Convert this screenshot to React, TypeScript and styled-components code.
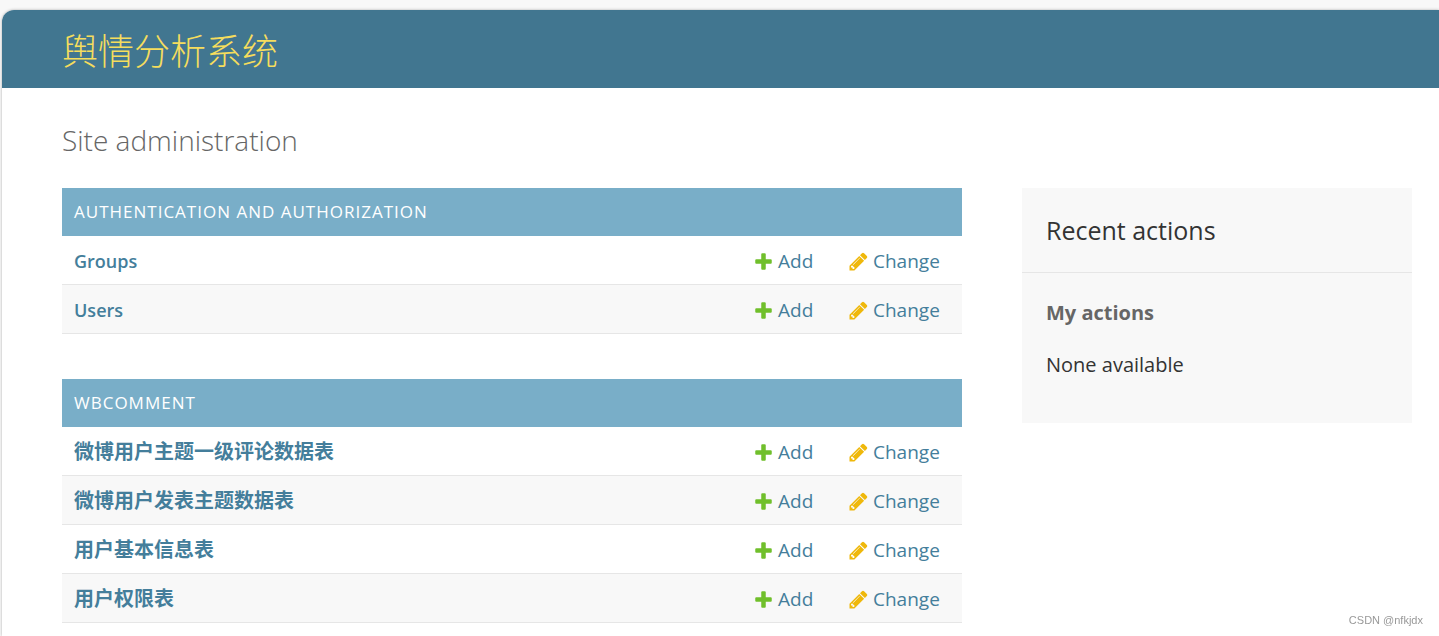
import React from "react";
import styled, { createGlobalStyle } from "styled-components";

const GlobalStyle = createGlobalStyle`
  *, *::before, *::after { box-sizing: border-box; }
  body {
    margin: 0;
    background: #f8f8f8;
    color: #333;
    font-family: "Open Sans", "Noto Sans CJK SC", sans-serif;
    font-size: 19px;
  }
  h1, h2, h3, p { margin: 0; }
`;

const Page = styled.div`
  padding: 10px 0 0 2px;
  overflow: hidden;
`;

const Container = styled.div`
  min-height: calc(100vh - 10px);
  overflow: hidden;
  background: #fff;
  border-top-left-radius: 12px;
  box-shadow: 0 0 3px rgba(0, 0, 0, 0.3);
`;

const Header = styled.header`
  display: flex;
  align-items: center;
  height: 78px;
  padding: 0 60px;
  background: #417690;
`;

const SiteName = styled.h1`
  font-family: "Noto Sans CJK SC", sans-serif;
  font-size: 36px;
  font-weight: 300;
  line-height: 48px;
`;

const SiteLink = styled.a`
  color: #f5dd5d;
  text-decoration: none;
`;

const Content = styled.main`
  padding: 30px 27px 13px 60px;
`;

const PageTitle = styled.h2`
  margin-bottom: 26px;
  color: #666;
  font-size: 28px;
  font-weight: 300;
  line-height: 44px;
`;

const Columns = styled.div`
  display: grid;
  grid-template-columns: minmax(0, 1fr) 390px;
  align-items: start;
  gap: 60px;
`;

const Modules = styled.div`
  display: grid;
  gap: 45px;
`;

const ModuleTable = styled.table`
  width: 100%;
  border-collapse: separate;
  border-spacing: 0;
`;

const Caption = styled.caption`
  height: 48px;
  padding: 0 12px;
  background: #79aec8;
  text-align: left;
  text-transform: uppercase;
  font-size: 17px;
  letter-spacing: 1px;
  line-height: 48px;
`;

const CaptionLink = styled.a`
  color: #fff;
  text-decoration: none;
`;

const Row = styled.tr`
  &:nth-child(even) { background: #f8f8f8; }
  > * {
    height: 49px;
    padding: 2px 12px 0;
    border-bottom: 1px solid #e6e6e6;
    line-height: 28px;
  }
`;

const NameCell = styled.th`
  text-align: left;
`;

const ActionCell = styled.td<{ $width: number }>`
  width: ${(p) => p.$width}px;
`;

const ModelLink = styled.a<{ $cjk: boolean }>`
  color: #447e9b;
  font-size: ${(p) => (p.$cjk ? 20 : 18)}px;
  font-weight: ${(p) => (p.$cjk ? 700 : 600)};
  text-decoration: none;
`;

const ActionLink = styled.a`
  display: flex;
  align-items: center;
  gap: 4px;
  color: #447e9b;
  text-decoration: none;
`;

const Icon = styled.svg`
  flex: none;
  width: 21px;
  height: 21px;
`;

const Sidebar = styled.aside`
  background: #f8f8f8;
`;

const SidebarTitle = styled.h2`
  padding: 24px;
  border-bottom: 1px solid #e6e6e6;
  font-size: 25px;
  font-weight: 400;
  line-height: 36px;
`;

const SidebarBody = styled.div`
  display: grid;
  gap: 24px;
  padding: 26px 24px 44px;
  font-size: 20px;
  line-height: 28px;
`;

const SidebarSubtitle = styled.h3`
  color: #666;
  font-size: 20px;
  font-weight: 700;
`;

const Watermark = styled.small`
  position: fixed;
  right: 16px;
  bottom: 8px;
  color: #999;
  font-family: "Liberation Sans", sans-serif;
  font-size: 11px;
  line-height: 16px;
`;

const PlusIcon = () => (
  <Icon viewBox="0 0 1792 1792" aria-hidden="true">
    <path
      fill="#70bf2b"
      d="M1600 796v192q0 40-28 68t-68 28h-416v416q0 40-28 68t-68 28h-192q-40 0-68-28t-28-68v-416h-416q-40 0-68-28t-28-68v-192q0-40 28-68t68-28h416v-416q0-40 28-68t68-28h192q40 0 68 28t28 68v416h416q40 0 68 28t28 68z"
    />
  </Icon>
);

const PencilIcon = () => (
  <Icon viewBox="0 0 1792 1792" aria-hidden="true">
    <path
      fill="#efb80b"
      d="M491 1536l91-91-235-235-91 91v107h128v128h107zm523-928q0-22-22-22-10 0-17 7l-542 542q-7 7-7 17 0 22 22 22 10 0 17-7l542-542q7-7 7-17zm-54-192l416 416-832 832h-416v-416zm683 96q0 53-37 90l-166 166-416-416 166-165q36-38 90-38 53 0 91 38l235 234q37 39 37 91z"
    />
  </Icon>
);

interface AppModule {
  name: string;
  cjk: boolean;
  models: string[];
}

const modules: AppModule[] = [
  { name: "Authentication and Authorization", cjk: false, models: ["Groups", "Users"] },
  {
    name: "Wbcomment",
    cjk: true,
    models: ["微博用户主题一级评论数据表", "微博用户发表主题数据表", "用户基本信息表", "用户权限表"],
  },
];

const Module = ({ name, cjk, models }: AppModule) => (
  <ModuleTable>
    <Caption>
      <CaptionLink href="#">{name}</CaptionLink>
    </Caption>
    <tbody>
      {models.map((model) => (
        <Row key={model}>
          <NameCell scope="row">
            <ModelLink href="#" $cjk={cjk}>{model}</ModelLink>
          </NameCell>
          <ActionCell $width={95}>
            <ActionLink href="#"><PlusIcon />Add</ActionLink>
          </ActionCell>
          <ActionCell $width={126}>
            <ActionLink href="#"><PencilIcon />Change</ActionLink>
          </ActionCell>
        </Row>
      ))}
    </tbody>
  </ModuleTable>
);

export default function App() {
  return (
    <Page>
      <GlobalStyle />
      <Container>
        <Header>
          <SiteName>
            <SiteLink href="#">舆情分析系统</SiteLink>
          </SiteName>
        </Header>
        <Content>
          <PageTitle>Site administration</PageTitle>
          <Columns>
            <Modules>
              {modules.map((m) => (
                <Module key={m.name} {...m} />
              ))}
            </Modules>
            <Sidebar>
              <SidebarTitle>Recent actions</SidebarTitle>
              <SidebarBody>
                <SidebarSubtitle>My actions</SidebarSubtitle>
                <p>None available</p>
              </SidebarBody>
            </Sidebar>
          </Columns>
        </Content>
      </Container>
      <Watermark>CSDN @nfkjdx</Watermark>
    </Page>
  );
}
